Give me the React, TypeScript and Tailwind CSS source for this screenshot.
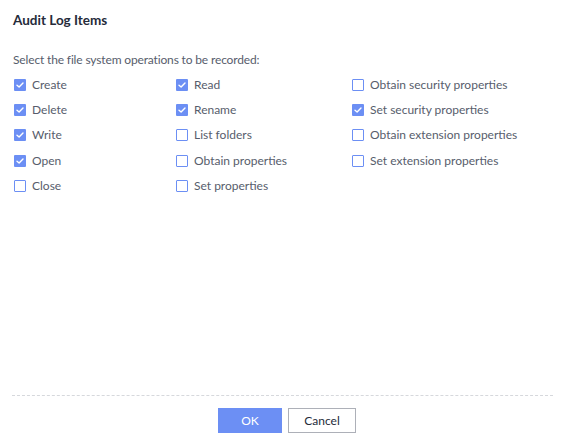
const columns = [
  [
    { label: 'Create', checked: true },
    { label: 'Delete', checked: true },
    { label: 'Write', checked: true },
    { label: 'Open', checked: true },
    { label: 'Close', checked: false },
  ],
  [
    { label: 'Read', checked: true },
    { label: 'Rename', checked: true },
    { label: 'List folders', checked: false },
    { label: 'Obtain properties', checked: false },
    { label: 'Set properties', checked: false },
  ],
  [
    { label: 'Obtain security properties', checked: false },
    { label: 'Set security properties', checked: true },
    { label: 'Obtain extension properties', checked: false },
    { label: 'Set extension properties', checked: false },
  ],
]

function Checkbox({ checked }: { checked: boolean }) {
  if (checked) {
    return (
      <span className="flex h-[12px] w-[12px] shrink-0 items-center justify-center rounded-[1px] bg-[#6c8ff4]">
        <svg width="8" height="6" viewBox="0 0 8 6" fill="none">
          <path d="M1 3.2 L3.1 5 L7 1" stroke="#fff" strokeWidth="1.4" strokeLinecap="round" strokeLinejoin="round" />
        </svg>
      </span>
    )
  }
  return <span className="h-[12px] w-[12px] shrink-0 rounded-[1px] border border-[#6c8ff4] bg-white" />
}

export default function App() {
  return (
    <div
      className="flex h-[440px] w-[565px] flex-col bg-white text-[#575d6c]"
      style={{ fontFamily: 'Lato, "Noto Sans", sans-serif' }}
    >
      <div className="px-[13px] pt-[10px] text-[13.5px] font-bold leading-[20px] text-[#252b3a]">
        Audit Log Items
      </div>
      <div className="px-[13px] pt-[22px] text-[12px] leading-[16px] tracking-[-0.15px]">
        Select the file system operations to be recorded:
      </div>
      <div className="flex pl-[14px] pt-[4px]">
        {columns.map((col, i) => (
          <div key={i} className={i === 0 ? 'w-[162px]' : i === 1 ? 'w-[176px]' : 'flex-1'}>
            {col.map((item) => (
              <label key={item.label} className="flex h-[25.3px] items-center gap-[6px] text-[12px]">
                <Checkbox checked={item.checked} />
                <span>{item.label}</span>
              </label>
            ))}
          </div>
        ))}
      </div>
      <div className="flex-1" />
      <div className="mx-[12px] border-t border-dashed border-[#d6d8dc]" />
      <div className="flex justify-center gap-[6px] pb-[7px] pl-[9px] pt-[12px]">
        <button className="h-[25px] w-[64px] bg-[#6c8ff4] text-[12px] text-white">OK</button>
        <button className="h-[25px] w-[68px] border border-[#adb0b8] bg-white text-[12px] text-[#252b3a]">
          Cancel
        </button>
      </div>
    </div>
  )
}
